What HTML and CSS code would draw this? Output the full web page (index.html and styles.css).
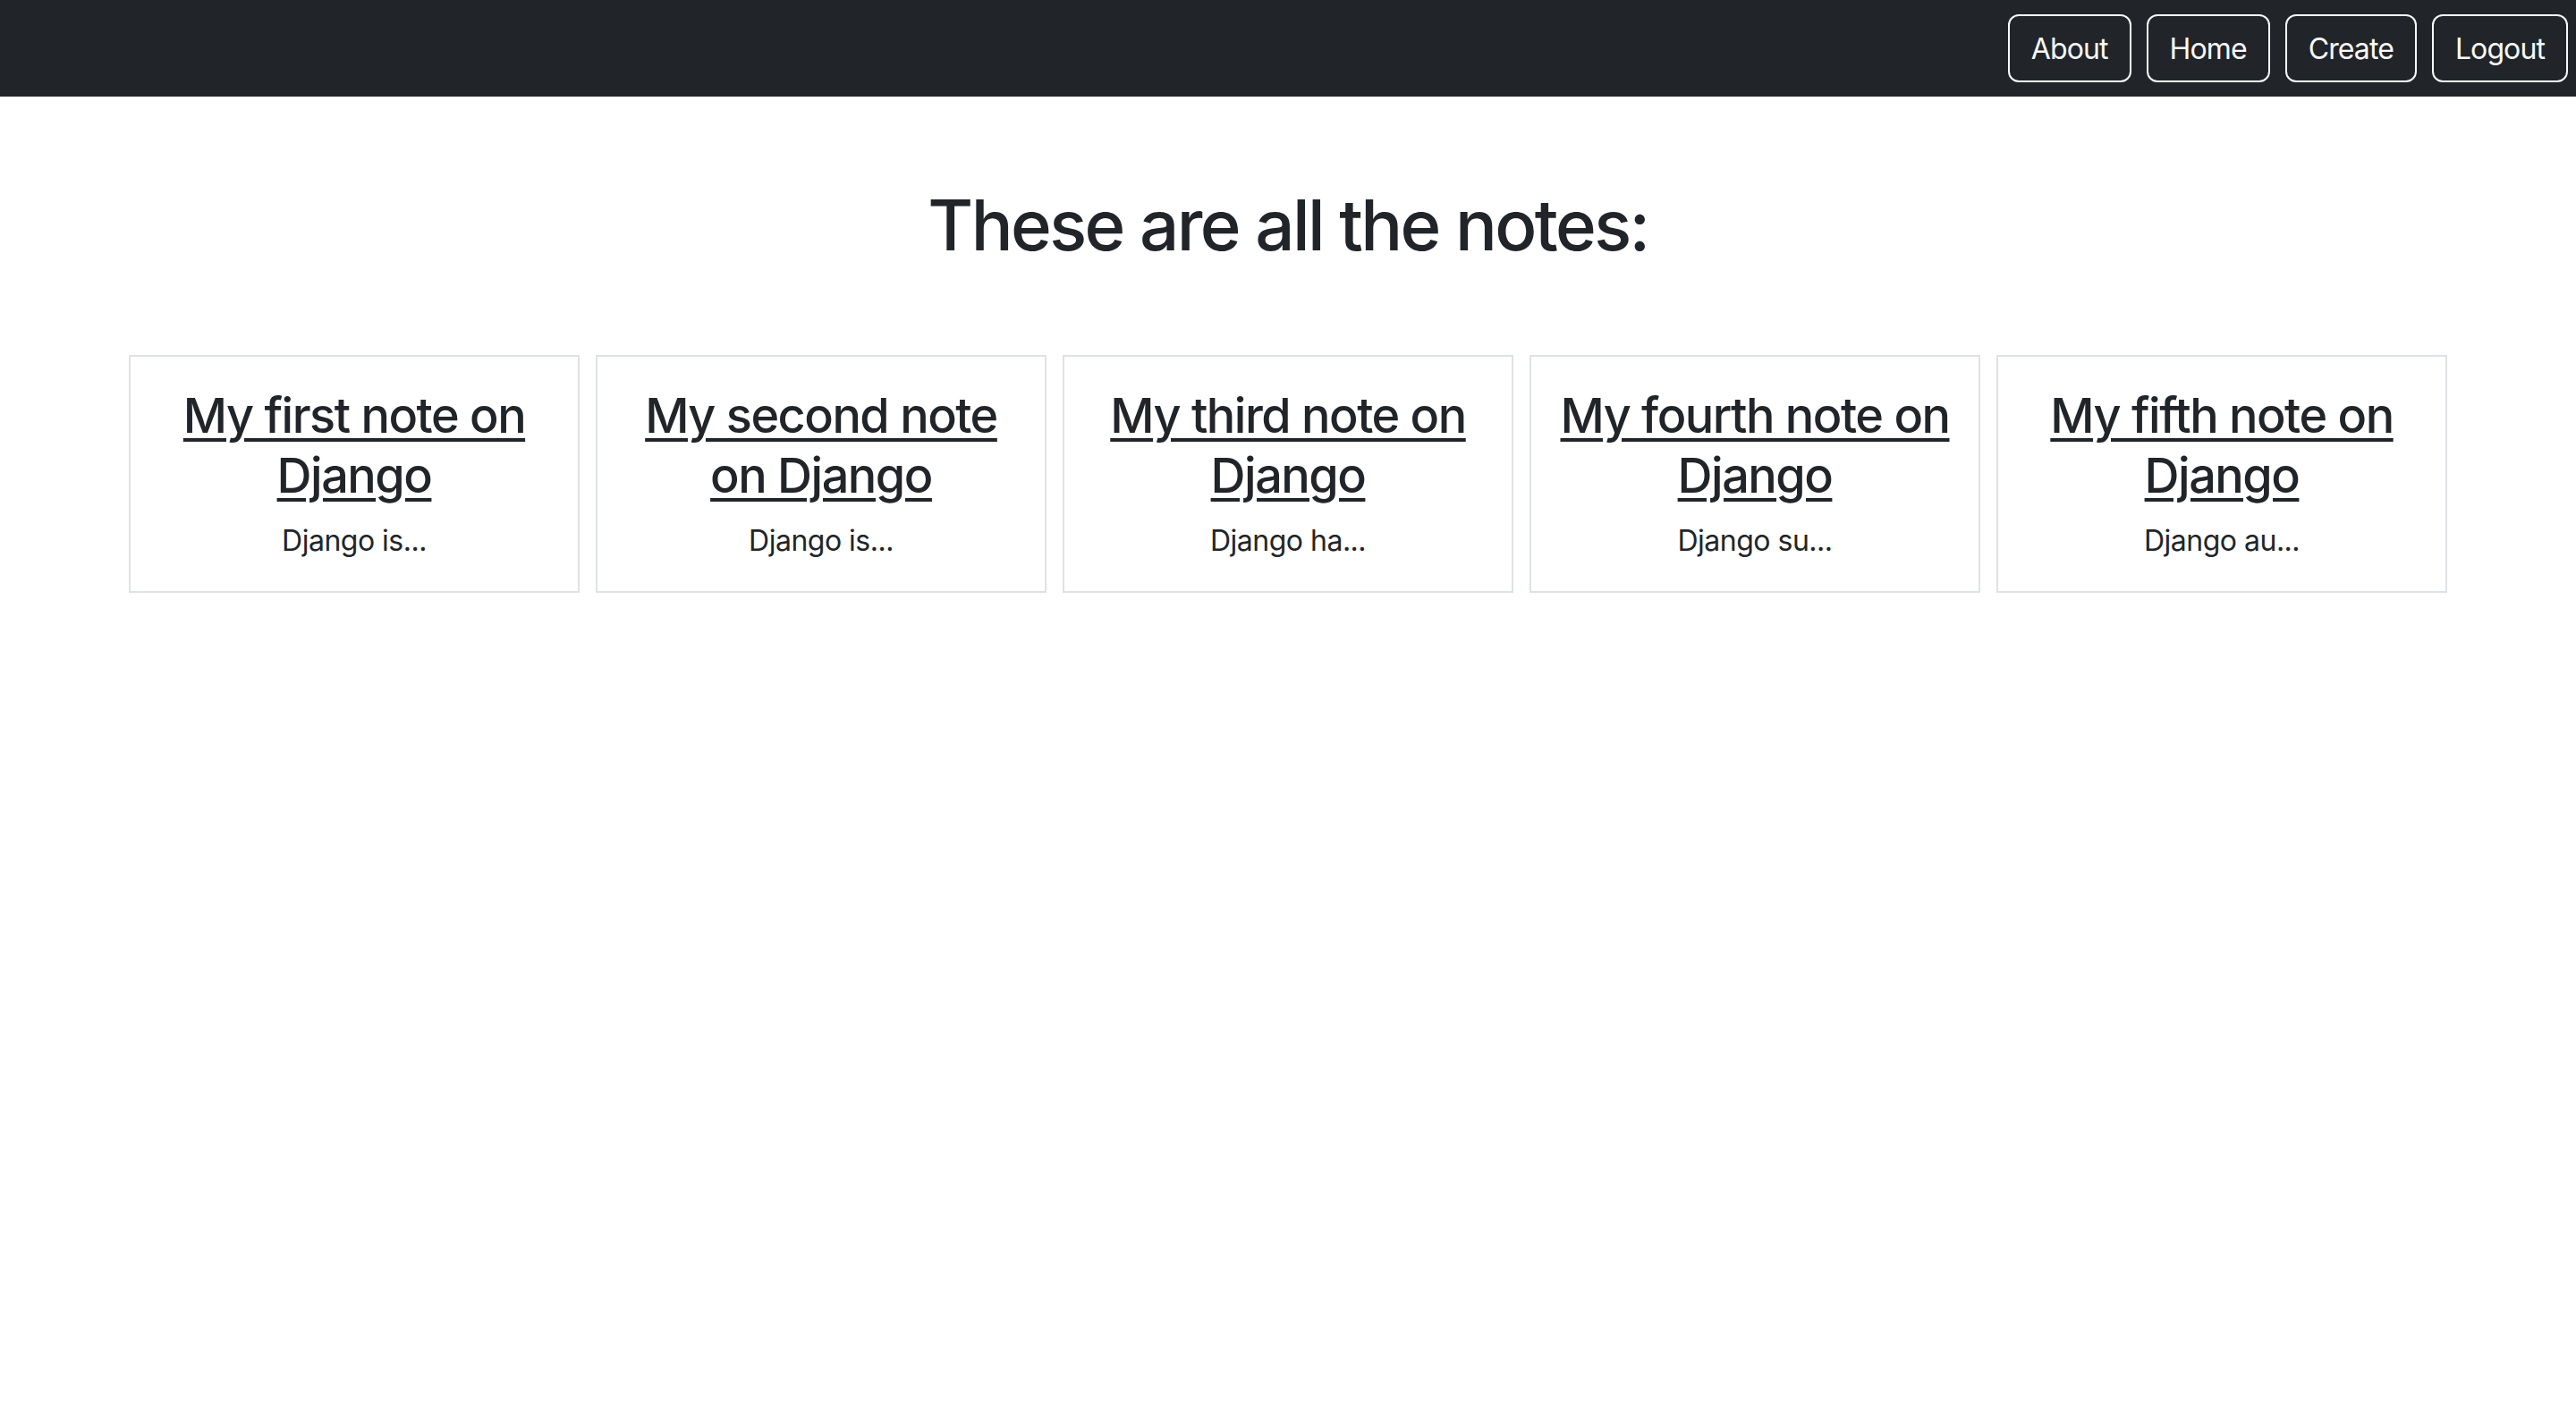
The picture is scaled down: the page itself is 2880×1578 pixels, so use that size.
FILE: index.html
```html
<!DOCTYPE html>
<html lang="en">
<head>
<meta charset="utf-8">
<title>Notes</title>
<link rel="stylesheet" href="styles.css">
</head>
<body>
<nav class="navbar">
  <div class="nav-actions">
    <a class="nav-btn" href="#">About</a>
    <a class="nav-btn" href="#">Home</a>
    <a class="nav-btn" href="#">Create</a>
    <a class="nav-btn" href="#">Logout</a>
  </div>
</nav>
<main class="container">
  <h1 class="page-title">These are all the notes:</h1>
  <div class="notes-grid">
    <div class="note-card">
      <h3 class="note-title"><a href="#">My first note on Django</a></h3>
      <p class="note-text">Django is...</p>
    </div>
    <div class="note-card">
      <h3 class="note-title"><a href="#">My second note on Django</a></h3>
      <p class="note-text">Django is...</p>
    </div>
    <div class="note-card">
      <h3 class="note-title"><a href="#">My third note on Django</a></h3>
      <p class="note-text">Django ha...</p>
    </div>
    <div class="note-card">
      <h3 class="note-title"><a href="#">My fourth note on Django</a></h3>
      <p class="note-text">Django su...</p>
    </div>
    <div class="note-card">
      <h3 class="note-title"><a href="#">My fifth note on Django</a></h3>
      <p class="note-text">Django au...</p>
    </div>
  </div>
</main>
</body>
</html>
```
FILE: styles.css
```css
* { box-sizing: border-box; }
html, body {
  margin: 0;
  padding: 0;
  background: #ffffff;
  color: #212529;
  font-family: Inter, "Noto Sans", "Liberation Sans", sans-serif;
}
.navbar {
  background: #212529;
  height: 108px;
  display: flex;
  align-items: center;
  justify-content: flex-end;
  padding: 0 9px 0 0;
}
.nav-actions {
  display: flex;
  gap: 17px;
}
.nav-btn {
  display: inline-flex;
  align-items: center;
  justify-content: center;
  height: 76px;
  padding: 0 24px;
  border: 2px solid #f8f9fa;
  border-radius: 12px;
  color: #f8f9fa;
  text-decoration: none;
  font-size: 32px;
  letter-spacing: -0.9px;
}
.container {
  width: 2592px;
  margin: 0 auto;
}
.page-title {
  margin: 96px 0 97px;
  text-align: center;
  font-size: 78px;
  line-height: 96px;
  font-weight: 500;
  letter-spacing: -2.6px;
}
.notes-grid {
  display: grid;
  grid-template-columns: repeat(5, 1fr);
  gap: 18px;
}
.note-card {
  border: 2px solid #dee2e6;
  padding: 32px 20px;
  text-align: center;
}
.note-title {
  margin: 0 0 16px;
  font-size: 54px;
  line-height: 67px;
  font-weight: 500;
  letter-spacing: -1.5px;
}
.note-title a {
  color: #212529;
  text-decoration: underline;
  text-decoration-thickness: 4px;
  text-underline-offset: 6px;
}
.note-text {
  margin: 0;
  font-size: 32px;
  line-height: 48px;
  letter-spacing: -0.5px;
}
```
